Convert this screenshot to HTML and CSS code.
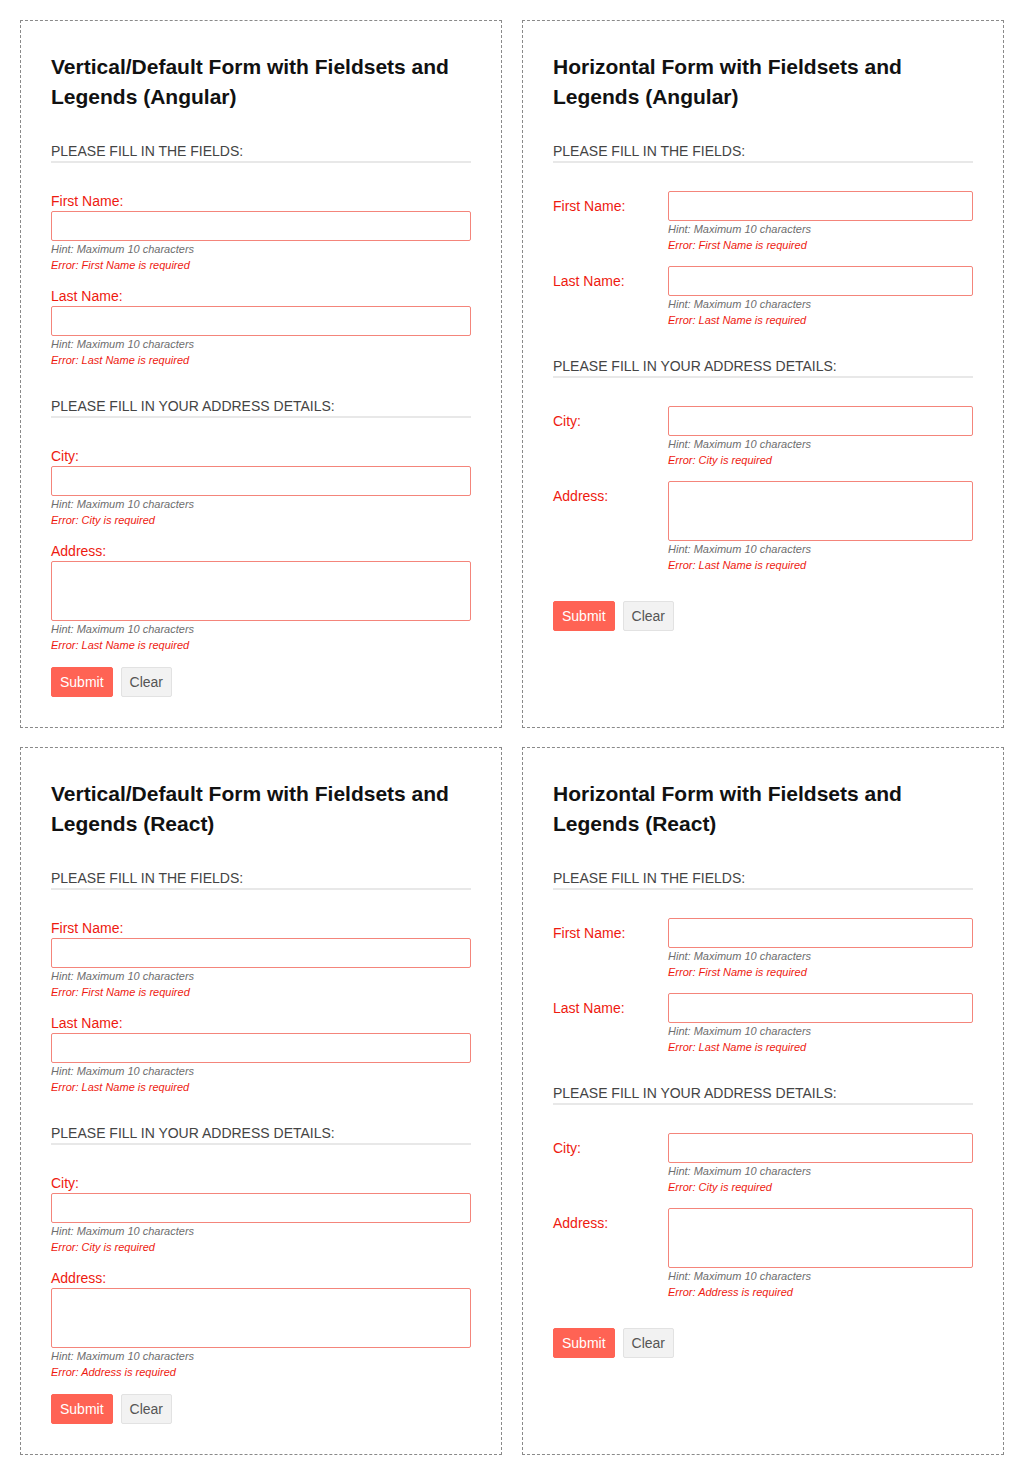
FILE: index.html
```html
<!DOCTYPE html>
<html lang="en">
<head>
<meta charset="utf-8">
<title>Forms with Fieldsets and Legends</title>
<link rel="stylesheet" href="styles.css">
</head>
<body>
<div class="grid">

  <section class="card">
    <h2 class="title">Vertical/Default Form with Fieldsets and Legends (Angular)</h2>
    <form class="form">
      <fieldset class="fs">
        <legend class="legend">Please fill in the fields:</legend>
        <div class="group">
          <label class="label">First Name:</label>
          <div class="control"><input class="input" type="text"><div class="hint">Hint: Maximum 10 characters</div><div class="error">Error: First Name is required</div></div>
        </div>
        <div class="group">
          <label class="label">Last Name:</label>
          <div class="control"><input class="input" type="text"><div class="hint">Hint: Maximum 10 characters</div><div class="error">Error: Last Name is required</div></div>
        </div>
      </fieldset>
      <fieldset class="fs">
        <legend class="legend">Please fill in your address details:</legend>
        <div class="group">
          <label class="label">City:</label>
          <div class="control"><input class="input" type="text"><div class="hint">Hint: Maximum 10 characters</div><div class="error">Error: City is required</div></div>
        </div>
        <div class="group">
          <label class="label">Address:</label>
          <div class="control"><textarea class="input textarea"></textarea><div class="hint">Hint: Maximum 10 characters</div><div class="error">Error: Last Name is required</div></div>
        </div>
      </fieldset>
      <div class="actions"><button type="button" class="btn btn-primary">Submit</button><button type="button" class="btn btn-default">Clear</button></div>
    </form>
  </section>

  <section class="card">
    <h2 class="title">Horizontal Form with Fieldsets and Legends (Angular)</h2>
    <form class="form form-horizontal">
      <fieldset class="fs">
        <legend class="legend">Please fill in the fields:</legend>
        <div class="group">
          <label class="label">First Name:</label>
          <div class="control"><input class="input" type="text"><div class="hint">Hint: Maximum 10 characters</div><div class="error">Error: First Name is required</div></div>
        </div>
        <div class="group">
          <label class="label">Last Name:</label>
          <div class="control"><input class="input" type="text"><div class="hint">Hint: Maximum 10 characters</div><div class="error">Error: Last Name is required</div></div>
        </div>
      </fieldset>
      <fieldset class="fs">
        <legend class="legend">Please fill in your address details:</legend>
        <div class="group">
          <label class="label">City:</label>
          <div class="control"><input class="input" type="text"><div class="hint">Hint: Maximum 10 characters</div><div class="error">Error: City is required</div></div>
        </div>
        <div class="group">
          <label class="label">Address:</label>
          <div class="control"><textarea class="input textarea"></textarea><div class="hint">Hint: Maximum 10 characters</div><div class="error">Error: Last Name is required</div></div>
        </div>
      </fieldset>
      <div class="actions"><button type="button" class="btn btn-primary">Submit</button><button type="button" class="btn btn-default">Clear</button></div>
    </form>
  </section>

  <section class="card">
    <h2 class="title">Vertical/Default Form with Fieldsets and Legends (React)</h2>
    <form class="form">
      <fieldset class="fs">
        <legend class="legend">Please fill in the fields:</legend>
        <div class="group">
          <label class="label">First Name:</label>
          <div class="control"><input class="input" type="text"><div class="hint">Hint: Maximum 10 characters</div><div class="error">Error: First Name is required</div></div>
        </div>
        <div class="group">
          <label class="label">Last Name:</label>
          <div class="control"><input class="input" type="text"><div class="hint">Hint: Maximum 10 characters</div><div class="error">Error: Last Name is required</div></div>
        </div>
      </fieldset>
      <fieldset class="fs">
        <legend class="legend">Please fill in your address details:</legend>
        <div class="group">
          <label class="label">City:</label>
          <div class="control"><input class="input" type="text"><div class="hint">Hint: Maximum 10 characters</div><div class="error">Error: City is required</div></div>
        </div>
        <div class="group">
          <label class="label">Address:</label>
          <div class="control"><textarea class="input textarea"></textarea><div class="hint">Hint: Maximum 10 characters</div><div class="error">Error: Address is required</div></div>
        </div>
      </fieldset>
      <div class="actions"><button type="button" class="btn btn-primary">Submit</button><button type="button" class="btn btn-default">Clear</button></div>
    </form>
  </section>

  <section class="card">
    <h2 class="title">Horizontal Form with Fieldsets and Legends (React)</h2>
    <form class="form form-horizontal">
      <fieldset class="fs">
        <legend class="legend">Please fill in the fields:</legend>
        <div class="group">
          <label class="label">First Name:</label>
          <div class="control"><input class="input" type="text"><div class="hint">Hint: Maximum 10 characters</div><div class="error">Error: First Name is required</div></div>
        </div>
        <div class="group">
          <label class="label">Last Name:</label>
          <div class="control"><input class="input" type="text"><div class="hint">Hint: Maximum 10 characters</div><div class="error">Error: Last Name is required</div></div>
        </div>
      </fieldset>
      <fieldset class="fs">
        <legend class="legend">Please fill in your address details:</legend>
        <div class="group">
          <label class="label">City:</label>
          <div class="control"><input class="input" type="text"><div class="hint">Hint: Maximum 10 characters</div><div class="error">Error: City is required</div></div>
        </div>
        <div class="group">
          <label class="label">Address:</label>
          <div class="control"><textarea class="input textarea"></textarea><div class="hint">Hint: Maximum 10 characters</div><div class="error">Error: Address is required</div></div>
        </div>
      </fieldset>
      <div class="actions"><button type="button" class="btn btn-primary">Submit</button><button type="button" class="btn btn-default">Clear</button></div>
    </form>
  </section>

</div>
</body>
</html>
```

FILE: styles.css
```css
* { box-sizing: border-box; }

html, body {
  margin: 0;
  padding: 0;
  background: #fff;
}

body {
  padding: 20px;
  font-family: "Liberation Sans", Arial, sans-serif;
  color: #222;
}

.grid {
  display: grid;
  grid-template-columns: 482px 482px;
  column-gap: 20px;
  row-gap: 19px;
}

.card {
  border: 1px dashed #8a8a8a;
  padding: 31px 30px 30px 30px;
}

.title {
  margin: 0 0 29px 0;
  font-size: 21px;
  line-height: 30px;
  font-weight: bold;
  color: #111;
}

.form { margin: 0; }

.fs {
  border: 0;
  margin: 0 0 15px 0;
  padding: 0;
  min-width: 0;
}

.fs:last-of-type { margin-bottom: 1px; }

.legend {
  display: block;
  width: 100%;
  padding: 0;
  margin: 0 0 28px 0;
  font-size: 14px;
  line-height: 20px;
  text-transform: uppercase;
  color: #444;
  border-bottom: 2px solid #e8e8e8;
}

.group {
  margin-bottom: 13px;
}

.label {
  display: block;
  font-size: 14px;
  line-height: 20px;
  color: #ee1a10;
}

.input {
  display: block;
  width: 100%;
  height: 30px;
  margin: 0;
  padding: 4px 6px;
  border: 1px solid #f4857b;
  border-radius: 2px;
  background: #fff;
  font-family: inherit;
  font-size: 14px;
  outline: none;
}

.textarea {
  height: 60px;
  resize: none;
}

.hint, .error {
  font-size: 11px;
  line-height: 16px;
  font-style: italic;
}

.hint { color: #6e6e6e; }
.error { color: #ee1a10; }

.actions {
  display: flex;
  gap: 8px;
}

.btn {
  height: 30px;
  padding: 0 8px;
  border-radius: 2px;
  font-family: inherit;
  font-size: 14px;
  line-height: 28px;
  cursor: pointer;
}

.btn-primary {
  background: #ff6354;
  border: 1px solid #ff6354;
  color: #fff;
}

.btn-default {
  background: #f2f2f2;
  border: 1px solid #e2e2e2;
  color: #555;
}

/* Horizontal variant */
.form-horizontal .group {
  display: flex;
  align-items: flex-start;
}

.form-horizontal .label {
  flex: 0 0 115px;
  padding-top: 5px;
}

.form-horizontal .control {
  flex: 1 1 auto;
  min-width: 0;
}

.form-horizontal .fs:last-of-type {
  margin-bottom: 15px;
}
```
